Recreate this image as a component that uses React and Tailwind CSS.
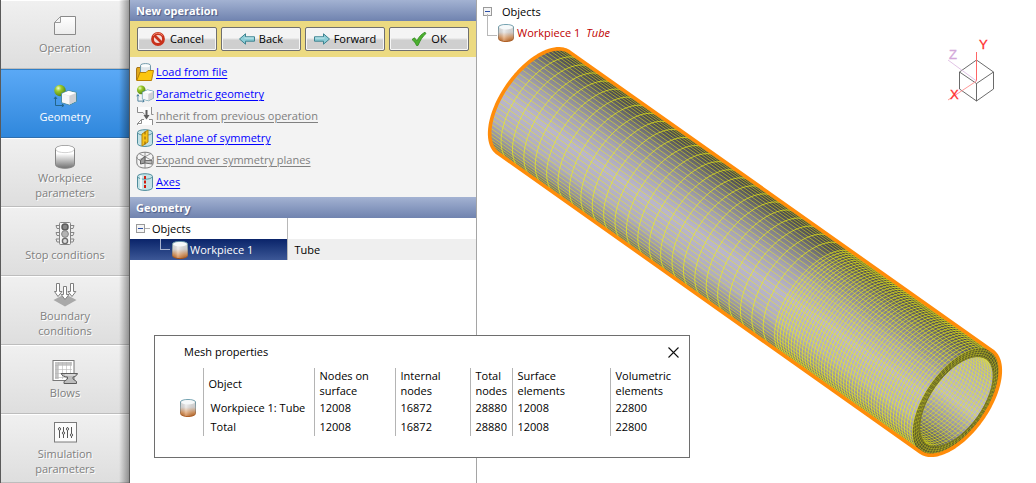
import React from "react";

/* ---------- icons ---------- */

function PageIcon() {
  return (
    <svg viewBox="0 0 24 24" className="h-6 w-6">
      <defs>
        <linearGradient id="pg" x1="0" y1="0" x2="0" y2="1">
          <stop offset="0" stopColor="#fff" />
          <stop offset="1" stopColor="#ececec" />
        </linearGradient>
      </defs>
      <path d="M7.5 1.5H22.5V19.5H1.5V7.5Z" fill="url(#pg)" stroke="#8a8a8a" />
      <path d="M1.5 7.5H7.5V1.5Z" fill="#f4f4f4" stroke="#9a9a9a" />
    </svg>
  );
}

function SolidsIcon({ className = "h-6 w-6" }) {
  return (
    <svg viewBox="0 0 24 24" className={className}>
      <defs>
        <radialGradient id="ball" cx=".35" cy=".3" r=".75">
          <stop offset="0" stopColor="#f0fbd0" />
          <stop offset=".35" stopColor="#9ccb2c" />
          <stop offset="1" stopColor="#4f7f10" />
        </radialGradient>
      </defs>
      <path d="M2.5 21.5V13M2.5 21.5H10.5M1 15L2.5 12.8L4 15M8.8 20L11 21.5L8.8 23" fill="none" stroke="#23658a" />
      <circle cx="7" cy="6.5" r="5.7" fill="url(#ball)" />
      <path d="M8.5 9.5L15.5 6.5L23.5 8.5V17.5L16.5 21L8.5 18.5Z" fill="#e4e4e6" stroke="#4c8fa3" strokeLinejoin="round" />
      <path d="M9 9.8L16.5 12V20.5L9 18.2Z" fill="#f6f6f7" />
      <path d="M9 9.5L15.5 7L23 8.8L16.5 11.6Z" fill="#fff" />
      <path d="M16.5 12L23 9.2V17.2L16.5 20.5Z" fill="#cfd0d4" />
    </svg>
  );
}

function DrumIcon() {
  return (
    <svg viewBox="0 0 24 24" className="h-6 w-6">
      <defs>
        <linearGradient id="drum" x1="0" y1="0" x2="0" y2="1">
          <stop offset=".35" stopColor="#fff" />
          <stop offset="1" stopColor="#727272" />
        </linearGradient>
      </defs>
      <path d="M2.5 4C2.5 -.5 21.5 -.5 21.5 4V19.5C21.5 24.5 2.5 24.5 2.5 19.5Z" fill="url(#drum)" stroke="#858585" />
      <ellipse cx="12" cy="4.2" rx="9" ry="3.4" fill="#fff" />
      <path d="M3 4.5C3 8.7 21 8.7 21 4.5" fill="none" stroke="#d2d2d2" />
    </svg>
  );
}

function TrafficIcon() {
  return (
    <svg viewBox="0 0 24 24" className="h-6 w-6" fill="none" stroke="#858585">
      <path d="M6.5 3.5H3L4 6.5H6.5M6.5 10.5H3L4 13.5H6.5M6.5 17H3L4 20H6.5M17.5 3.5H21L20 6.5H17.5M17.5 10.5H21L20 13.5H17.5M17.5 17H21L20 20H17.5" fill="#eee" />
      <rect x="6.5" y=".5" width="11" height="22" rx="1" fill="#f6f6f6" />
      <circle cx="12" cy="5" r="3" fill="#888" stroke="#5c5c5c" strokeWidth="1.5" />
      <circle cx="12" cy="12" r="3.4" fill="#b4b4b4" />
      <circle cx="12" cy="19" r="2.6" fill="#ddd" stroke="#6c6c6c" strokeWidth="1.4" />
    </svg>
  );
}

function BoundaryIcon() {
  return (
    <svg viewBox="0 0 24 24" className="h-6 w-6">
      <path d="M.5 17L12 11L23.5 17L12 23.5Z" fill="#a9a9a9" />
      <g fill="#fff" stroke="#7f7f7f">
        <path d="M3.5 .5H6.5V8.5H9L5 13.5L1.5 8.5H3.5Z" />
        <path d="M17.5 .5H20.5V8.5H22.8L19 13.5L15 8.5H17.5Z" />
        <path d="M10.5 3.5H13.5V11.5H16L12 16.5L8.2 11.5H10.5Z" />
      </g>
    </svg>
  );
}

function BlowsIcon() {
  return (
    <svg viewBox="0 0 24 24" className="h-6 w-6 overflow-visible">
      <rect x="0" y=".5" width="21" height="20" fill="#fff" stroke="#777" />
      <rect x="2" y="2" width="17" height="3" fill="#c4c4c4" />
      <rect x="2" y="5" width="3" height="14" fill="#c4c4c4" />
      <path d="M5.500 2V19M9.500 2V19M13.500 2V19M17.500 2V19M2 5.500H19M2 9.500H19M2 13.500H19M2 17.500H19" stroke="#b5b5b5" strokeWidth=".6" />
      <path d="M8 13.5H24.5C24 16 21 17 20 17V19L23.5 21.5V23.5H11V21.5L14.5 19V17C11 17 9 15.5 8 13.5Z" fill="#bdbdbd" stroke="#5d5d5d" />
      <path d="M12 15H22" stroke="#eee" />
    </svg>
  );
}

function SlidersIcon() {
  return (
    <svg viewBox="0 0 24 24" className="h-6 w-6">
      <rect x="1.5" y="1.5" width="22" height="19.5" fill="#fbfbfb" stroke="#7a7a7a" />
      <path d="M6.5 6V17M10.5 6V17M14.5 6V17M18.5 6V17" stroke="#555" />
      <g fill="#fff" stroke="#555">
        <circle cx="6.5" cy="8" r="1.2" />
        <circle cx="10.5" cy="12" r="1.2" />
        <circle cx="14.5" cy="8" r="1.2" />
        <circle cx="18.5" cy="14" r="1.2" />
      </g>
    </svg>
  );
}

function WorkpieceIcon() {
  return (
    <svg viewBox="0 0 18 18" className="h-[18px] w-[18px] shrink-0">
      <defs>
        <linearGradient id="wp" x1="0" y1="0" x2="0" y2="1">
          <stop offset="0" stopColor="#f2f4f5" />
          <stop offset=".45" stopColor="#e2e0df" />
          <stop offset=".75" stopColor="#df9a60" />
          <stop offset="1" stopColor="#bb5608" />
        </linearGradient>
        <linearGradient id="wph" x1="0" y1="0" x2="1" y2="0">
          <stop offset="0" stopColor="#555" stopOpacity=".12" />
          <stop offset=".35" stopColor="#fff" stopOpacity=".35" />
          <stop offset="1" stopColor="#555" stopOpacity=".15" />
        </linearGradient>
        <linearGradient id="wps" x1="0" y1="0" x2="0" y2="1">
          <stop offset="0" stopColor="#6397a8" />
          <stop offset=".5" stopColor="#9aa0a0" />
          <stop offset="1" stopColor="#a8500f" />
        </linearGradient>
      </defs>
      <path d="M1.5 3C1.5 -.2 16.5 -.2 16.5 3V14.5C16.5 18.4 1.5 18.4 1.5 14.5Z" fill="url(#wp)" stroke="url(#wps)" />
      <path d="M2 3H16V14.5C16 18 2 18 2 14.5Z" fill="url(#wph)" />
      <ellipse cx="9" cy="3.3" rx="6.8" ry="2.2" fill="#f6f9fa" />
    </svg>
  );
}

function CancelIcon() {
  return (
    <svg viewBox="0 0 16 16" className="h-4 w-4 shrink-0">
      <circle cx="8" cy="8" r="5.5" fill="#f3dcd8" stroke="#c8321c" strokeWidth="2.8" />
      <path d="M4 4L12 12" stroke="#c8321c" strokeWidth="2.6" />
      <path d="M3 4.8A6 6 0 0 1 12.8 4.6" fill="none" stroke="#f08a72" strokeWidth=".9" />
    </svg>
  );
}

function ArrowIcon({ right }) {
  return (
    <svg viewBox="0 0 16 16" className="h-4 w-4 shrink-0">
      <path
        d={right ? "M15.5 8L9.5 2.8V5.8H.5V10.2H9.5V13.2Z" : "M.5 8L6.5 2.8V5.8H15.5V10.2H6.5V13.2Z"}
        fill="#8ccdd6"
        stroke="#3d828f"
        strokeLinejoin="round"
      />
      <path d={right ? "M1.2 7H10.5" : "M5.5 7H14.8"} stroke="#c9ebf0" />
    </svg>
  );
}

function CheckIcon() {
  return (
    <svg viewBox="0 0 16 16" className="h-4 w-4 shrink-0">
      <path d="M1 8.5L3.5 6.8L6 9.8C8 5.5 10.5 3 14 1.2L15 2.5C11.5 5.5 9 9.5 7 14.5H5.5C4.5 12 3 10 1 8.5Z" fill="#4caf2f" stroke="#2f8a1c" strokeWidth=".8" strokeLinejoin="round" />
    </svg>
  );
}

function FolderIcon() {
  return (
    <svg viewBox="0 0 18 18" className="h-[18px] w-[18px] shrink-0">
      <path d="M.5 6V17L2 17.5L4 9H13V6H6L5 4.5H1Z" fill="#e0a91c" stroke="#a8741a" />
      <path d="M4.5 2.5C4.5 0 14.5 0 14.5 2.5V11H4.5Z" fill="#dfe6ea" stroke="#6e97a8" />
      <ellipse cx="9.5" cy="2.8" rx="4.4" ry="1.5" fill="#fbfdfd" />
      <path d="M4 9.5H10L12 7.5H17.5L15.5 17.5H.8Z" fill="#fcc60e" stroke="#b98208" strokeLinejoin="round" />
    </svg>
  );
}

function InheritIcon() {
  return (
    <svg viewBox="0 0 18 18" className="h-[18px] w-[18px] shrink-0">
      <path d="M2 0H15V6.500L9 7L2 5Z" fill="#fbfbfb" />
      <path d="M1.500 0V5.500H7L8.500 7.500M15.500 0V7.500H17.500" fill="none" stroke="#8c8c8c" />
      <path d="M4.500 12.500H16.500V18H1.500V15.500Z" fill="#fff" />
      <path d="M1.500 18V16.500L5.500 12.500H8M1.500 16.500H5.500V12.500M13 12.500H16.500V18" fill="none" stroke="#8c8c8c" />
      <path d="M10.500 3V9" stroke="#5c5c5c" strokeWidth="2" />
      <path d="M7.500 8H13.500L10.500 12.500Z" fill="#5c5c5c" />
    </svg>
  );
}

function CylinderIcon({ kind }) {
  const muted = kind === "expand";
  const line = muted ? "#7f7f7f" : "#4f8c9c";
  return (
    <svg viewBox="0 0 18 18" className="h-[18px] w-[18px] shrink-0">
      <path
        d={muted ? "M.8 6C.8 -.4 17.2 -.4 17.2 6V12C17.2 18.8 .8 18.8 .8 12Z" : "M1.5 3.5C1.5 -.2 16.5 -.2 16.5 3.5V14.5C16.5 18.4 1.5 18.4 1.5 14.5Z"}
        fill={muted ? "#f4f4f4" : "#c4e2e6"}
        stroke={line}
      />
      {muted ? (
        <g fill="none" stroke="#7f7f7f">
          <path d="M.8 6C.8 11.5 17.2 11.5 17.2 6M3 2.5L15 9M15 2.5L3 9M9 1V17" strokeWidth=".8" />
          <path d="M9 5.500L4.500 9.500V13L9 12Z" fill="#9d9d9d" stroke="#5f5f5f" />
          <path d="M9 9.500H16V13L9 12Z" fill="#b9b9b9" stroke="#6f6f6f" />
        </g>
      ) : (
        <path d="M1.8 3.8C2.2 7 15.8 7 16.2 3.8" fill="none" stroke={line} strokeWidth=".9" />
      )}
      {kind === "plane" && <path d="M6 5L12 1V13L6 17Z" fill="#f6c21a" stroke="#b4860c" />}
      {kind === "plane" && <path d="M9 2.5V15.5" stroke="#8a5a00" strokeDasharray="3 2" />}
      {kind === "axis" && <path d="M5 2.5V16" stroke="#fff" strokeWidth="2" opacity=".8" />}
      {kind === "axis" && <path d="M9 3V15" stroke="#d01e10" strokeWidth="2" strokeDasharray="3 1.5" />}
    </svg>
  );
}

function Expander() {
  return (
    <button aria-label="Collapse Objects" className="flex h-[9px] w-[9px] shrink-0 items-center justify-center border border-[#9a9a9a] bg-[#f4f4f4]">
      <span className="h-px w-[5px] bg-[#2b4fa8]" />
    </button>
  );
}

/* ---------- mesh drawing ---------- */

const AXIS = [0.8165, 0.5774];
const NORMAL = [-0.5774, 0.8165];
const START = [533.5, 102.5];
const LENGTH = 518;
const SEGMENTS = 76;

function at(radius, angle, dist) {
  const u = radius * Math.cos(angle);
  const v = (radius / 2) * Math.sin(angle) + dist;
  return [
    START[0] + NORMAL[0] * u + AXIS[0] * v,
    START[1] + NORMAL[1] * u + AXIS[1] * v,
  ];
}

const fmt = (p) => p[0].toFixed(2) + " " + p[1].toFixed(2);

function arc(radius, from, to, dist) {
  const pts = [];
  for (let i = 0; i <= 48; i++) pts.push(fmt(at(radius, from + ((to - from) * i) / 48, dist)));
  return "M" + pts.join("L");
}

function seg(a, b) {
  return "M" + fmt(a) + "L" + fmt(b);
}

const stations = [];
for (let i = 0; i <= 75; i++) {
  stations.push(i <= 25 ? (i / 25) * 349 : 349 + ((i - 25) / 50) * (LENGTH - 349));
}

const R = 62;
const RI = 52;
const TAU = Math.PI * 2;
const outerRings = stations.map((s) => arc(R, Math.PI, TAU, s)).join("");
let outerLines = "";
let innerLines = "";
let spokes = "";
for (let k = 0; k < SEGMENTS; k++) {
  const a = (k / SEGMENTS) * TAU;
  if (a >= Math.PI) outerLines += seg(at(R, a, 0), at(R, a, LENGTH));
  else innerLines += seg(at(RI, a, LENGTH), at(RI, a, LENGTH - 90));
  spokes += seg(at(RI, a, LENGTH), at(R, a, LENGTH));
}
const innerRings = stations.filter((s) => s > LENGTH - 60).map((s) => arc(RI, 0, Math.PI, s)).join("");
const layers = [0, 1, 2, 3, 4].map((i) => arc(RI + ((R - RI) * i) / 4, 0, TAU, LENGTH) + "Z").join("");
const silhouette = arc(R, Math.PI, TAU, 0) + arc(R, 0, Math.PI, LENGTH).replace("M", "L") + "Z";
const face = arc(R, 0, TAU, LENGTH) + "Z";
const hole = arc(RI, 0, TAU, LENGTH) + "Z";
const top = at(R, Math.PI, 0);
const bottom = at(R, 0, 0);
const holeTop = at(RI, Math.PI, LENGTH);
const holeBottom = at(RI, 0, LENGTH);

function TubeScene() {
  return (
    <svg viewBox="477 44 559 439" className="block w-full overflow-visible" role="img" aria-label="Tube mesh">
      <defs>
        <linearGradient id="shade" gradientUnits="userSpaceOnUse" x1={top[0]} y1={top[1]} x2={bottom[0]} y2={bottom[1]}>
          <stop offset="0" stopColor="#3c3c3e" />
          <stop offset=".1" stopColor="#58585c" />
          <stop offset=".22" stopColor="#7f7e86" />
          <stop offset=".4" stopColor="#a5a2b1" />
          <stop offset=".6" stopColor="#bab6cc" />
          <stop offset=".8" stopColor="#b0adc0" />
          <stop offset=".93" stopColor="#8f8d99" />
          <stop offset="1" stopColor="#5c5c60" />
        </linearGradient>
        <linearGradient id="bore" gradientUnits="userSpaceOnUse" x1={holeTop[0]} y1={holeTop[1]} x2={holeBottom[0]} y2={holeBottom[1]}>
          <stop offset="0" stopColor="#aaa8b6" />
          <stop offset=".5" stopColor="#bcb9ca" />
          <stop offset=".78" stopColor="#8d8b96" />
          <stop offset="1" stopColor="#48484a" />
        </linearGradient>
        <clipPath id="holeClip">
          <path d={hole} />
        </clipPath>
      </defs>
      <path d={silhouette} fill="url(#shade)" />
      <g fill="none" stroke="#f0f014">
        <path d={outerLines} strokeWidth=".7" strokeOpacity=".75" />
        <path d={outerRings} strokeWidth=".85" strokeOpacity=".82" />
      </g>
      <path d={face} fill="#55552c" />
      <path d={layers + spokes} fill="none" stroke="#dede18" strokeWidth=".6" strokeOpacity=".7" />
      <path d={hole} fill="url(#bore)" />
      <g clipPath="url(#holeClip)" fill="none" stroke="#f0f014" strokeWidth=".7" strokeOpacity=".78">
        <path d={innerLines} />
        <path d={innerRings} />
      </g>
      <path d={hole} fill="none" stroke="#77771c" />
      <path d={silhouette} fill="none" stroke="#ff8c0a" strokeWidth="3.6" strokeLinejoin="round" />
      <g fill="none" strokeWidth="1">
        <path d="M976.5 60L993.5 72V89L976.5 101L959.5 89V72ZM959.5 72L976.5 83.5L993.5 72M976.5 83.5V101" stroke="#5a5a5a" strokeWidth=".9" />
        <path d="M976.5 81V52" stroke="#f66" />
        <path d="M976.5 81L948 100" stroke="#f99" />
        <path d="M976.5 81L948 60" stroke="#e2c4e6" />
      </g>
      <g fontFamily="Liberation Sans, sans-serif" fontSize="13" strokeWidth=".3">
        <text x="979" y="49" fill="#ff3030" stroke="#ff3030">Y</text>
        <text x="949" y="59" fill="#d3a8da" stroke="#d3a8da">Z</text>
        <text x="950" y="99" fill="#ff3030" stroke="#ff3030">X</text>
      </g>
    </svg>
  );
}

/* ---------- panels ---------- */

const steps = [
  { label: "Operation", icon: <PageIcon /> },
  { label: "Geometry", icon: <SolidsIcon />, active: true },
  { label: "Workpiece parameters", icon: <DrumIcon /> },
  { label: "Stop conditions", icon: <TrafficIcon /> },
  { label: "Boundary conditions", icon: <BoundaryIcon /> },
  { label: "Blows", icon: <BlowsIcon /> },
  { label: "Simulation parameters", icon: <SlidersIcon /> },
];

function Sidebar() {
  return (
    <nav className="relative w-[130px] shrink-0 border-r border-l border-[#5a5a5a] bg-[#dedede]">
      {steps.map((s) => (
        <button
          key={s.label}
          className={
            "flex h-[69px] w-full flex-col items-center justify-center gap-px border-t border-b px-5 leading-[15px] " +
            (s.active
              ? "border-t-[#2f7fc8] border-b-[#2f6fae] bg-linear-to-b from-[#5aa9f6] to-[#2f87dc] text-white"
              : "border-t-white border-b-[#bdbdbd] bg-linear-to-b from-[#f0f0f0] to-[#dedede] text-[#808080] [text-shadow:1px_1px_0_#fff]")
          }
        >
          {s.icon}
          <span>{s.label}</span>
        </button>
      ))}
      <div className="pointer-events-none absolute inset-y-0 right-0 w-[10px] bg-linear-to-r from-black/0 to-black/35" />
    </nav>
  );
}

function PanelTitle({ children }) {
  return (
    <h2 className="flex h-[21px] items-center bg-linear-to-b from-[#a3b2d2] to-[#7083af] px-[6px] font-bold text-white [text-shadow:1px_1px_1px_#4a5a85]">
      {children}
    </h2>
  );
}

const actions = [
  { label: "Cancel", icon: <CancelIcon /> },
  { label: "Back", icon: <ArrowIcon /> },
  { label: "Forward", icon: <ArrowIcon right /> },
  { label: "OK", icon: <CheckIcon /> },
];

const links = [
  { label: "Load from file", icon: <FolderIcon /> },
  { label: "Parametric geometry", icon: <SolidsIcon className="h-[18px] w-[18px] shrink-0" /> },
  { label: "Inherit from previous operation", icon: <InheritIcon />, off: true },
  { label: "Set plane of symmetry", icon: <CylinderIcon kind="plane" /> },
  { label: "Expand over symmetry planes", icon: <CylinderIcon kind="expand" />, off: true },
  { label: "Axes", icon: <CylinderIcon kind="axis" /> },
];

function OperationPanel() {
  return (
    <section className="w-[347px] shrink-0 border-r border-[#a5a5a5] bg-white">
      <PanelTitle>New operation</PanelTitle>
      <div className="grid h-9 grid-cols-4 items-center gap-1 bg-[#ecda81] px-[7px]">
        {actions.map((a) => (
          <button key={a.label} className="flex h-6 items-center justify-center gap-1 rounded-[2px] border border-[#6f6f6f] bg-linear-to-b from-[#f4f4f4] from-45% to-[#cfcfcf] to-55% text-black shadow-[inset_0_0_0_1px_#f6f6f6]">
            {a.icon}
            {a.label}
          </button>
        ))}
      </div>
      <ul className="bg-[#f3f3f3] px-[6px] py-1">
        {links.map((l) => (
          <li key={l.label} className="flex h-[22px] items-center gap-[2px]">
            {l.icon}
            <a href="#" aria-disabled={l.off} className={"underline underline-offset-2 " + (l.off ? "text-[#808080]" : "text-[#0000ff]")}>
              {l.label}
            </a>
          </li>
        ))}
      </ul>
      <PanelTitle>Geometry</PanelTitle>
      <table className="w-full table-fixed border-collapse">
        <tbody>
          <tr className="h-[21px]">
            <td className="w-[157px] border-r border-[#b8b8b8] p-0">
              <div className="flex h-[21px] items-center pl-[6px]">
                <Expander />
                <span className="mr-[2px] h-px w-[5px] bg-[#b0b0b0]" />
                Objects
              </div>
            </td>
            <td />
          </tr>
          <tr className="h-[21px]">
            <td className="border-r border-[#b8b8b8] bg-linear-to-b from-[#0a246a] to-[#3c5796] p-0 text-white">
              <div className="flex h-[21px] items-center gap-px pl-[30px]">
                <span className="mb-[10px] h-[11px] w-[10px] border-b border-l border-[#a9b4d0]" />
                <WorkpieceIcon />
                Workpiece 1
              </div>
            </td>
            <td className="bg-[#efefef] py-0 pl-[7px]">Tube</td>
          </tr>
        </tbody>
      </table>
    </section>
  );
}

function Viewport() {
  return (
    <main className="min-w-0 flex-1 bg-white">
      <div className="flex h-[22px] items-center gap-[10px] pt-px pl-[6px]">
        <Expander />
        Objects
      </div>
      <div className="flex h-[22px] items-center pl-[10px] text-[#c00000]">
        <span className="mb-[16px] h-[22px] w-[10px] border-b border-l border-[#b8b8b8]" />
        <WorkpieceIcon />
        <span className="ml-[2px]">Workpiece 1</span>
        <em className="ml-[6px]">Tube</em>
      </div>
      <TubeScene />
    </main>
  );
}

const columns = [
  { head: "Object", width: "w-[111px]" },
  { head: "Nodes on surface", width: "w-[81px]" },
  { head: "Internal nodes", width: "w-[75px]" },
  { head: "Total nodes", width: "w-[42px]" },
  { head: "Surface elements", width: "w-[98px]" },
  { head: "Volumetric elements", width: "w-[76px]" },
];

const rows = [
  ["Workpiece 1: Tube", "12008", "16872", "28880", "12008", "22800"],
  ["Total", "12008", "16872", "28880", "12008", "22800"],
];

function MeshDialog() {
  return (
    <div role="dialog" aria-labelledby="mesh-title" className="absolute top-[335px] left-[154px] w-[536px] border border-[#6e6e6e] bg-white pb-[21px]">
      <div className="flex h-8 items-center justify-between pr-[10px] pl-[29px]">
        <h2 id="mesh-title">Mesh properties</h2>
        <button aria-label="Close">
          <svg viewBox="0 0 11 11" className="h-[11px] w-[11px]">
            <path d="M.5 .5L10.5 10.5M10.5 .5L.5 10.5" stroke="#111" strokeWidth="1.1" />
          </svg>
        </button>
      </div>
      <table className="ml-[24px] table-fixed border-collapse text-left leading-[15px]">
        <thead>
          <tr className="h-[30px]">
            <td className="w-[24px] p-0" />
            {columns.map((c) => (
              <th key={c.head} className={c.width + " border-l border-[#b4b4b4] p-0 font-normal"}>
                <div className={c.head.includes(" ") ? "w-min pl-[5px] whitespace-nowrap" : "pl-[5px]"}>
                  {c.head.includes(" ") ? (
                    <>
                      {c.head.slice(0, c.head.lastIndexOf(" "))}
                      <br />
                      {c.head.slice(c.head.lastIndexOf(" ") + 1)}
                    </>
                  ) : (
                    c.head
                  )}
                </div>
              </th>
            ))}
          </tr>
        </thead>
        <tbody>
          {rows.map((r, i) => (
            <tr key={r[0]} className="h-[19px]">
              <td className="p-0">{i === 0 && <WorkpieceIcon />}</td>
              {r.map((v, j) => (
                <td key={j} className={"border-l border-[#b4b4b4] py-0 pr-0 whitespace-nowrap " + (j === 0 ? "pl-[7px]" : "pl-[5px]")}>
                  {v}
                </td>
              ))}
            </tr>
          ))}
        </tbody>
      </table>
    </div>
  );
}

export default function App() {
  return (
    <div className="relative flex min-h-screen overflow-hidden bg-white font-['Open_Sans','Noto_Sans',sans-serif] text-[11px] leading-4 text-black">
      <Sidebar />
      <OperationPanel />
      <Viewport />
      <MeshDialog />
    </div>
  );
}
